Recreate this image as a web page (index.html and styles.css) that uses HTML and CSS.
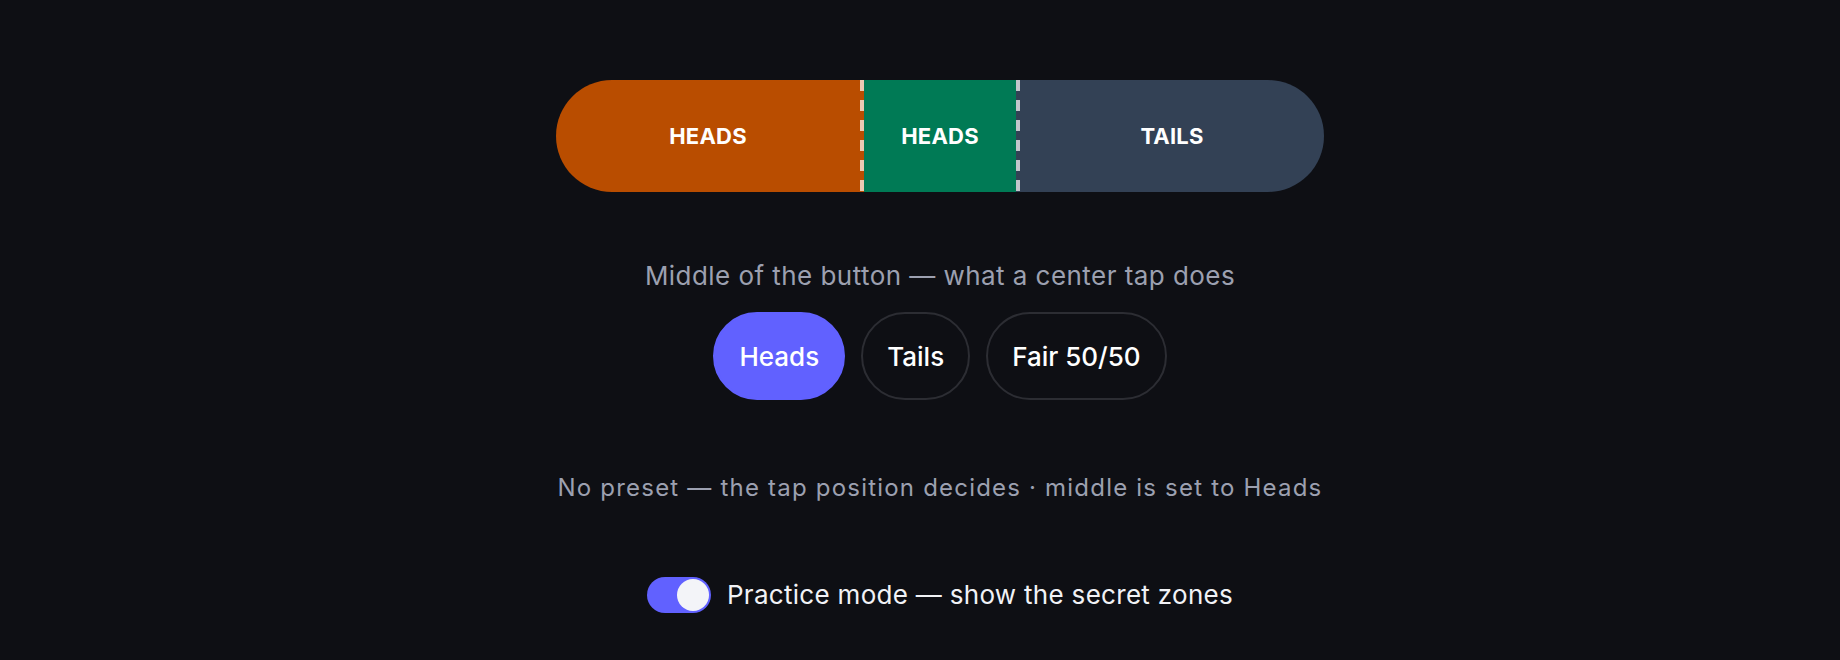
FILE: index.html
```html
<!DOCTYPE html>
<html lang="en">
<head>
    <meta charset="UTF-8">
    <meta name="viewport" content="width=device-width, initial-scale=1.0">
    <title>Coin Button</title>
    <link rel="stylesheet" href="styles.css">
</head>
<body>

    <main class="page">
        <div class="coin-bar">
            <div class="zone zone-heads">HEADS</div>
            <div class="zone zone-middle">HEADS</div>
            <div class="zone zone-tails">TAILS</div>
        </div>

        <p class="section-label">Middle of the button — what a center tap does</p>

        <div class="choice-group">
            <button class="choice active">Heads</button>
            <button class="choice">Tails</button>
            <button class="choice">Fair 50/50</button>
        </div>

        <p class="status">No preset — the tap position decides · middle is set to Heads</p>

        <label class="practice">
            <span class="switch on"><span class="knob"></span></span>
            <span class="practice-text">Practice mode — show the secret zones</span>
        </label>
    </main>

</body>
</html>
```

FILE: styles.css
```css
body {
    margin: 0;
    padding: 0 0 0 40px;
    background-color: #0e0f14;
    font-family: Inter, "Noto Sans", sans-serif;
    color: #f1f2f6;
}

.page {
    width: 768px;
    margin: 0 auto;
    padding-top: 80px;
    display: flex;
    flex-direction: column;
    align-items: center;
}

.coin-bar {
    display: flex;
    width: 100%;
    height: 112px;
    border-radius: 56px;
    overflow: hidden;
}

.zone {
    display: flex;
    align-items: center;
    justify-content: center;
    color: #fff;
    font-size: 22px;
    font-weight: 700;
    letter-spacing: 0.2px;
    background-repeat: no-repeat;
    background-size: 4px 100%;
}

.zone-heads {
    flex: 0 0 308px;
    padding-right: 4px;
    box-sizing: border-box;
    background-color: #b94d00;
    background-image: repeating-linear-gradient(to bottom, rgba(255, 255, 255, 0.7) 0 11px, transparent 11px 20px);
    background-position: right top;
}

.zone-middle {
    flex: 0 0 152px;
    background-color: #007a55;
}

.zone-tails {
    flex: 0 0 308px;
    padding-left: 4px;
    box-sizing: border-box;
    background-color: #334155;
    background-image: repeating-linear-gradient(to bottom, rgba(255, 255, 255, 0.7) 0 11px, transparent 11px 20px);
    background-position: left top;
}

.section-label {
    margin: 69px 0 0;
    font-size: 26px;
    line-height: 30px;
    letter-spacing: 0.45px;
    color: #9ca0b0;
}

.choice-group {
    display: flex;
    gap: 16px;
    margin-top: 21px;
}

.choice {
    height: 88px;
    padding: 0 24px;
    border: 2px solid #2c2d33;
    border-radius: 44px;
    background: transparent;
    color: #fff;
    font-family: inherit;
    font-size: 26px;
    font-weight: 500;
    cursor: pointer;
}

.choice.active {
    background-color: #6161ff;
    border-color: #6161ff;
}

.status {
    margin: 73px 0 0;
    font-size: 24px;
    line-height: 30px;
    letter-spacing: 1.2px;
    color: #9ca0b0;
}

.practice {
    display: flex;
    align-items: center;
    gap: 16px;
    margin-top: 74px;
    cursor: pointer;
}

.switch {
    display: flex;
    align-items: center;
    width: 64px;
    height: 36px;
    padding: 2px;
    box-sizing: border-box;
    border-radius: 18px;
    background-color: #3a3b44;
}

.switch.on {
    background-color: #6161ff;
    justify-content: flex-end;
}

.knob {
    width: 32px;
    height: 32px;
    border-radius: 50%;
    background-color: #f3f4f8;
}

.practice-text {
    font-size: 26px;
    line-height: 36px;
    letter-spacing: 0.3px;
    color: #f1f2f6;
}
```
